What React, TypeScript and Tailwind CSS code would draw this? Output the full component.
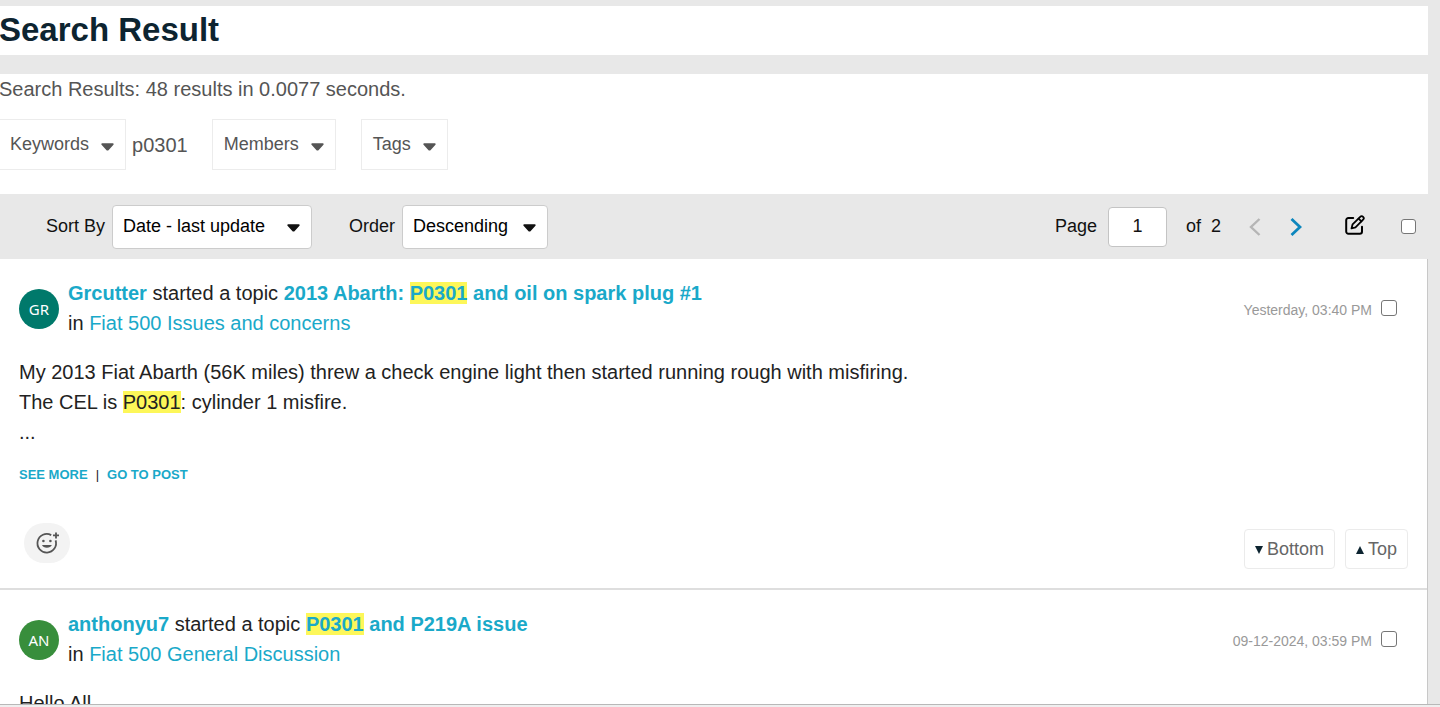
import type { ReactNode } from "react";

const SearchHit = ({ children }: { children: ReactNode }) => (
  <mark className="bg-[#fdf759] text-inherit">{children}</mark>
);

// Small rounded triangle shared by the filter buttons and the selects
const Caret = ({ className = "" }: { className?: string }) => (
  <svg
    viewBox="0 0 14 8"
    aria-hidden="true"
    className={`h-2 w-[13px] shrink-0 fill-current ${className}`}
  >
    <path d="M1.3 0h11.4c.9 0 1.3 1 .7 1.7L8.3 7.2c-.7.8-1.9.8-2.6 0L.6 1.7C0 1 .4 0 1.3 0Z" />
  </svg>
);

const FilterButton = ({ label }: { label: string }) => (
  <button
    type="button"
    className="flex h-[51px] items-center gap-3 border border-[#ececec] bg-white px-[11px] text-[18px] text-[#555]"
  >
    {label}
    <Caret className="mt-1" />
  </button>
);

type SortSelectProps = {
  id: string;
  label: string;
  options: string[];
  width: string;
};

const SortSelect = ({ id, label, options, width }: SortSelectProps) => (
  <div className="flex items-center gap-[7px]">
    <label htmlFor={id}>{label}</label>
    <div className="relative">
      <select
        id={id}
        className={`h-11 appearance-none rounded border border-[#ccc] bg-white pl-2.5 text-[18px] text-black ${width}`}
      >
        {options.map((option) => (
          <option key={option}>{option}</option>
        ))}
      </select>
      <Caret className="pointer-events-none absolute top-[19px] right-3" />
    </div>
  </div>
);

const ReactionButton = () => (
  <button
    type="button"
    aria-label="Add reaction"
    className="flex h-10 w-[46px] items-center justify-center rounded-full bg-[#f3f3f3] text-[#555]"
  >
    <svg viewBox="0 0 24 24" fill="none" stroke="currentColor" className="h-6 w-6">
      <path strokeWidth="1.8" d="M16.2 4.1A9.3 9.3 0 1 0 20.6 9.4" />
      <path strokeWidth="1.8" d="M21 1.4v6M18 4.4h6" />
      <circle cx="8.4" cy="10" r="1.3" fill="currentColor" stroke="none" />
      <circle cx="15.4" cy="10" r="1.3" fill="currentColor" stroke="none" />
      <path fill="currentColor" stroke="none" d="M7 14h9.8a5.2 4.2 0 0 1-9.8 0Z" />
    </svg>
  </button>
);

const EditIcon = () => (
  <svg
    viewBox="0 0 20 20"
    fill="none"
    stroke="currentColor"
    strokeWidth="2"
    strokeLinejoin="round"
    strokeLinecap="round"
    aria-hidden="true"
    className="size-5"
  >
    <path d="M8.2 3H3.4A2.2 2.2 0 0 0 1.2 5.2v11.4a2.2 2.2 0 0 0 2.2 2.2h11.4a2.2 2.2 0 0 0 2.2-2.2v-4.8" />
    <path strokeWidth="1.8" d="M6.5 13.4 7.6 9.3l7.6-7.5a2 2 0 0 1 2.9 2.9l-7.6 7.6-4 1.1Z" />
    <path strokeWidth="1.8" d="m13.6 3.6 2.8 2.8" />
  </svg>
);

type PostProps = {
  author: string;
  initials: string;
  avatarColor: string;
  title: ReactNode;
  forum: string;
  date: string;
  children: ReactNode;
};

const Post = ({ author, initials, avatarColor, title, forum, date, children }: PostProps) => (
  <article className="h-[331px] border-b-2 border-[#dedede] pr-[19px] pl-5">
    <header className="flex pt-[19px]">
      <div
        className={`mt-[11px] flex size-10 shrink-0 items-center justify-center rounded-full font-['Noto_Sans',sans-serif] text-[15px] text-white ${avatarColor}`}
      >
        {initials}
      </div>
      <div className="ml-[9px] flex-1 text-[20px] leading-[30px]">
        <h2>
          <a href="#" className="font-bold text-[#1aa9c9]">{author}</a> started a topic{" "}
          <a href="#" className="font-bold text-[#1aa9c9]">{title}</a>
        </h2>
        <p>
          in <a href="#" className="text-[#1aa9c9]">{forum}</a>
        </p>
      </div>
      <div className="flex h-[60px] items-center pr-[11px] text-[14px] text-[#999]">
        <time className="pt-1">{date}</time>
        <input
          type="checkbox"
          aria-label={`Select post by ${author}`}
          className="ml-[9px] size-4 appearance-none rounded-[3px] border border-[#767676] bg-white"
        />
      </div>
    </header>
    <div className="mt-[19px] text-[20px] leading-[30px]">{children}</div>
    <div className="mt-5 flex gap-2 text-[13px] leading-4 font-bold">
      <a href="#" className="text-[#1aa9c9]">SEE MORE</a>
      <span className="font-normal">|</span>
      <a href="#" className="text-[#1aa9c9]">GO TO POST</a>
    </div>
    <footer className="mt-10 flex items-start pl-[5px]">
      <ReactionButton />
      <div className="mt-1.5 ml-auto flex gap-2.5 text-[18px] text-[#666]">
        <a href="#" className="flex h-10 items-center gap-1 rounded-sm border border-[#ebebeb] px-2.5">
          <svg viewBox="0 0 8 8" aria-hidden="true" className="mt-0.5 size-2 fill-[#0d2430]">
            <path d="M0 0h8L4 8Z" />
          </svg>
          Bottom
        </a>
        <a href="#" className="flex h-10 items-center gap-1 rounded-sm border border-[#ebebeb] px-2.5">
          <svg viewBox="0 0 8 8" aria-hidden="true" className="mt-0.5 size-2 fill-[#0d2430]">
            <path d="M0 8h8L4 0Z" />
          </svg>
          Top
        </a>
      </div>
    </footer>
  </article>
);

export default function App() {
  return (
    <div className="flex h-screen flex-col overflow-hidden bg-[#e8e8e8] font-['Liberation_Sans',Arial,sans-serif] text-[#222]">
      <main className="-ml-px min-h-0 flex-1 overflow-hidden pt-1.5 pr-3">
        <h1 className="bg-white pt-px pb-0.5 text-[33px] leading-[46px] font-bold text-[#0d2430]">
          Search Result
        </h1>

        <section className="mt-[19px] bg-white pb-6 text-[20px] text-[#555]">
          <p className="leading-[30px]">Search Results: 48 results in 0.0077 seconds.</p>
          <div className="-ml-px mt-[15px] flex items-center">
            <FilterButton label="Keywords" />
            <span className="mr-6 ml-1.5">p0301</span>
            <FilterButton label="Members" />
            <div className="ml-[25px]">
              <FilterButton label="Tags" />
            </div>
          </div>
        </section>

        <form className="flex h-[65px] items-center pr-3 pl-[47px] text-[18px] text-[#111]">
          <SortSelect
            id="sort"
            label="Sort By"
            options={["Date - last update", "Relevance"]}
            width="w-[200px]"
          />
          <div className="ml-[37px]">
            <SortSelect
              id="order"
              label="Order"
              options={["Descending", "Ascending"]}
              width="w-[146px]"
            />
          </div>
          <div className="ml-auto flex items-center">
            <label htmlFor="page">Page</label>
            <input
              id="page"
              type="text"
              defaultValue="1"
              className="mr-[19px] ml-[11px] h-10 w-[59px] rounded border border-[#c4c4c4] bg-white text-center"
            />
            <span className="mr-2.5">of</span>
            <span>2</span>
            <button type="button" aria-label="Previous page" className="ml-7 text-[#b5b5b5]">
              <svg viewBox="0 0 12 18" fill="none" stroke="currentColor" strokeWidth="2.4" className="h-[18px] w-3">
                <path d="M10.5 1 2 9l8.5 8" />
              </svg>
            </button>
            <button type="button" aria-label="Next page" className="ml-[29px] text-[#0c86bd]">
              <svg viewBox="0 0 12 18" fill="none" stroke="currentColor" strokeWidth="2.8" className="h-[18px] w-3">
                <path d="M1.5 1 10 9l-8.5 8" />
              </svg>
            </button>
            <button type="button" aria-label="Edit" className="mr-9 mb-1 ml-[43px] text-black">
              <EditIcon />
            </button>
            <input
              type="checkbox"
              aria-label="Select all"
              className="size-[15px] appearance-none rounded-[3px] border border-[#767676] bg-white"
            />
          </div>
        </form>

        <section className="border-r border-[#c8c8c8] bg-white">
          <Post
            author="Grcutter"
            initials="GR"
            avatarColor="bg-[#00796b]"
            title={
              <>
                2013 Abarth: <SearchHit>P0301</SearchHit> and oil on spark plug #1
              </>
            }
            forum="Fiat 500 Issues and concerns"
            date="Yesterday, 03:40 PM"
          >
            <p>My 2013 Fiat Abarth (56K miles) threw a check engine light then started running rough with misfiring.</p>
            <p>
              The CEL is <SearchHit>P0301</SearchHit>: cylinder 1 misfire.
            </p>
            <p>...</p>
          </Post>
          <Post
            author="anthonyu7"
            initials="AN"
            avatarColor="bg-[#388e3c]"
            title={
              <>
                <SearchHit>P0301</SearchHit> and P219A issue
              </>
            }
            forum="Fiat 500 General Discussion"
            date="09-12-2024, 03:59 PM"
          >
            <p>Hello All,</p>
          </Post>
        </section>
      </main>
      <div className="h-[3px] shrink-0 border-t border-[#b8b8b8] bg-[#efefef]" />
    </div>
  );
}
